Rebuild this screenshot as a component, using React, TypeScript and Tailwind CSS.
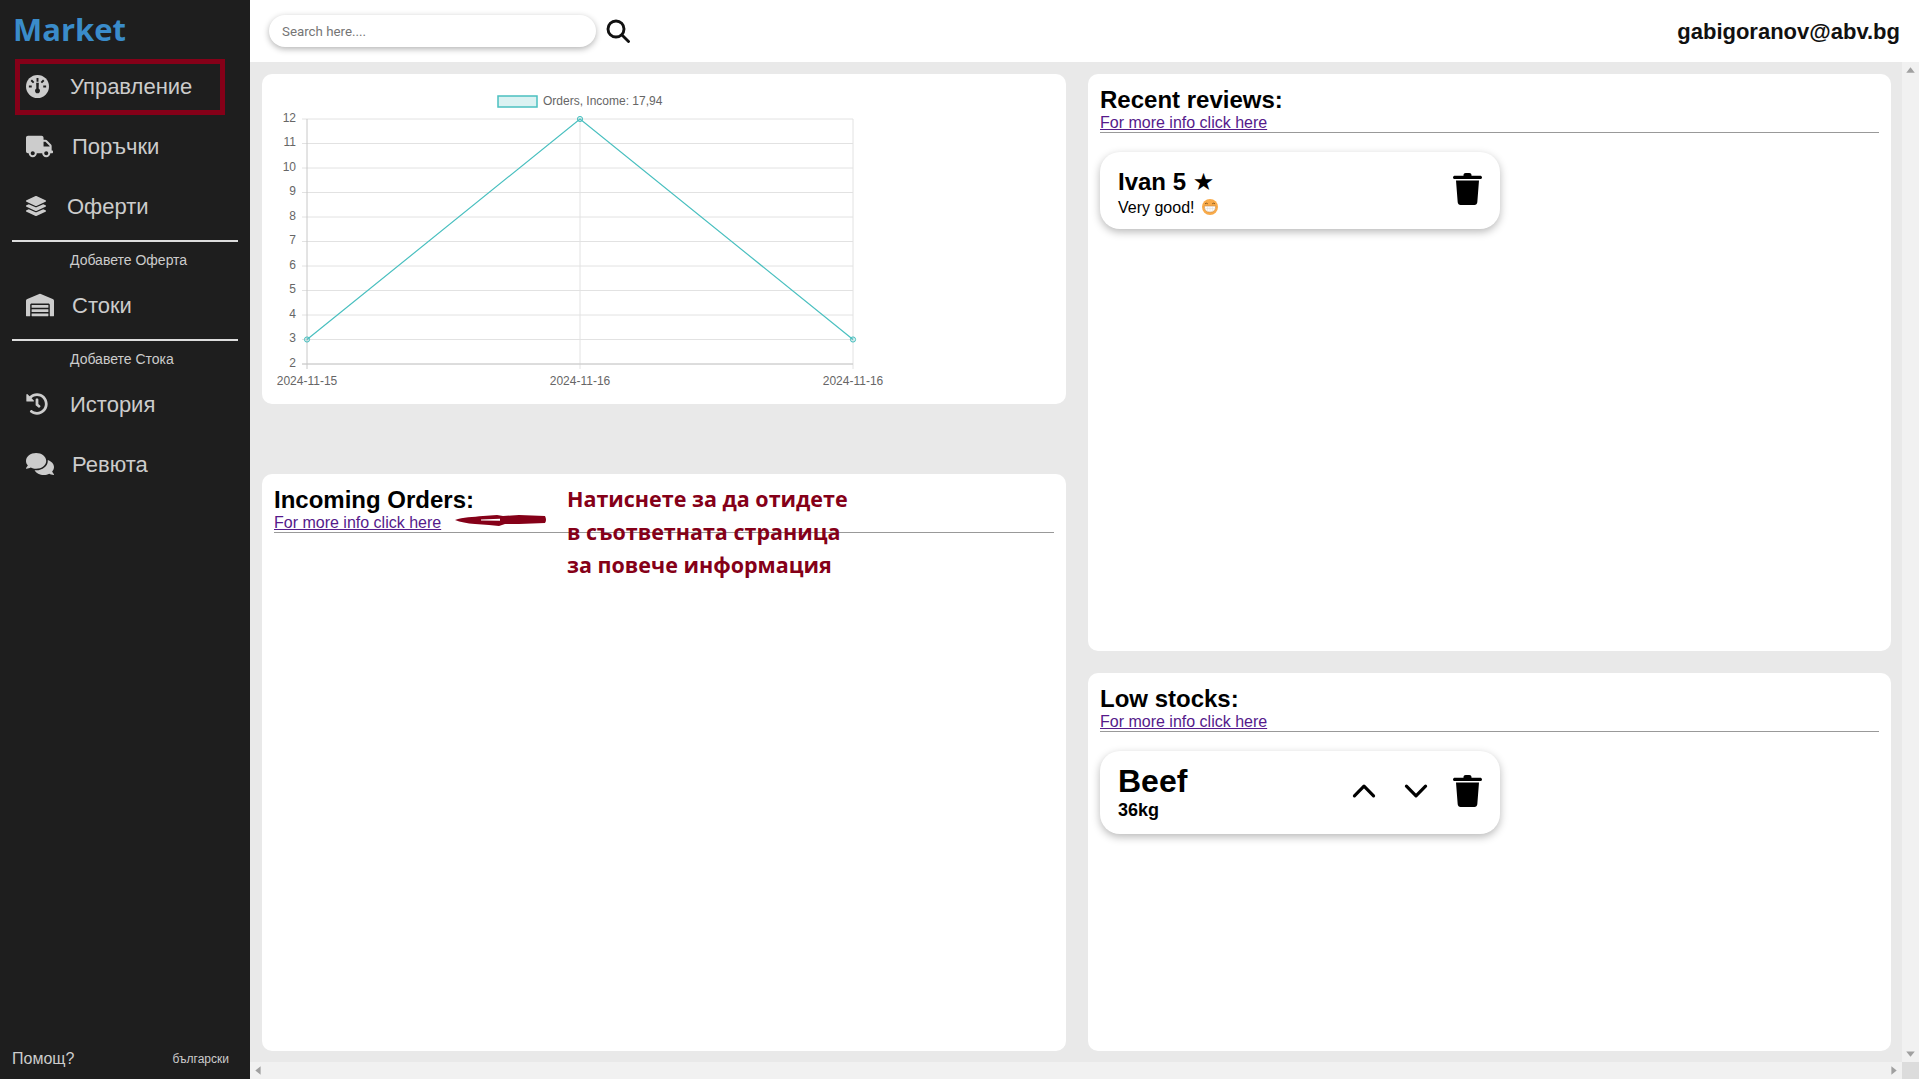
import type { ReactNode } from 'react';
import { FaTruck, FaLayerGroup, FaWarehouse, FaHistory, FaComments } from 'react-icons/fa';
import { IoChevronUp, IoChevronDown } from 'react-icons/io5';

const yTicks = [12, 11, 10, 9, 8, 7, 6, 5, 4, 3, 2];
const chartLeft = 45;
const chartMid = 318;
const chartRight = 591;
const chartTop = 45;
const tickGap = 24.5;
const yFor = (value: number) => chartTop + (12 - value) * tickGap;
const xTicks = [chartLeft, chartMid, chartRight];
const chartPoints = [
  { x: chartLeft, y: yFor(3) },
  { x: chartMid, y: yFor(12) },
  { x: chartRight, y: yFor(3) },
];

function GaugeIcon() {
  return (
    <svg viewBox="0 0 24 24" className="h-[23px] w-[23px]">
      <circle cx="12" cy="12" r="12" fill="#cccccc" />
      <path d="M12 3v4M5.500 5.500l2.500 2.500M18.500 5.500L16 8M3 12h3M21 12h-3" stroke="#1e1e1e" strokeWidth="2" />
      <path d="M10.600 8h2.800l-.2 6.200a2.600 2.600 0 1 1-2.400 0z" fill="#1e1e1e" />
    </svg>
  );
}

function NavItem({ icon, label, gap }: { icon: ReactNode; label: string; gap: string }) {
  return (
    <div className={`flex h-[60px] items-center pl-[26px] text-[22px] text-[#cccccc] ${gap}`}>
      {icon}
      <span>{label}</span>
    </div>
  );
}

function SubItem({ label }: { label: string }) {
  return (
    <>
      <div className="mx-3 h-[2px] bg-[#dddddd]" />
      <div className="flex h-[33px] items-center pt-[4px] pl-[70px] text-[14px] text-[#cccccc]">{label}</div>
    </>
  );
}

function Sidebar() {
  return (
    <aside className="relative flex h-full w-[250px] shrink-0 flex-col bg-[#1e1e1e]">
      <div className="h-[56px] pl-[13px] pt-[7px] font-['Open_Sans',sans-serif] text-[31px] leading-[45px] font-bold text-[#3a8cca]">
        Market
      </div>
      <NavItem icon={<GaugeIcon />} label="Управление" gap="gap-[21px]" />
      <NavItem icon={<FaTruck className="text-[27px]" />} label="Поръчки" gap="gap-[19px]" />
      <NavItem icon={<FaLayerGroup className="text-[20px]" />} label="Оферти" gap="gap-[21px]" />
      <div className="h-[4px]" />
      <SubItem label="Добавете Оферта" />
      <NavItem icon={<FaWarehouse className="text-[28px]" />} label="Стоки" gap="gap-[18px]" />
      <div className="h-[4px]" />
      <SubItem label="Добавете Стока" />
      <NavItem icon={<FaHistory className="text-[22px]" />} label="История" gap="gap-[22px]" />
      <NavItem icon={<FaComments className="text-[28px]" />} label="Ревюта" gap="gap-[18px]" />
      <div className="mt-auto flex h-[42px] items-center justify-between pt-[2px] pl-3 pr-[21px] text-[#cccccc]">
        <span className="text-[16px]">Помощ?</span>
        <span className="text-[12px]">български</span>
      </div>
      {/* annotation box round the first item */}
      <div className="absolute left-[15px] top-[59px] h-[56px] w-[210px] border-[5px] border-[#850018]" />
    </aside>
  );
}

function TopBar() {
  return (
    <header className="flex h-[62px] shrink-0 items-center bg-white pr-[19px] pl-[19px]">
      <input
        placeholder="Search here...."
        className="mb-[1px] h-[32px] w-[327px] rounded-full bg-white pt-[2px] pr-3 pl-[13px] font-['Roboto',sans-serif] text-[13.3px] text-black shadow-[0_2px_6px_rgba(0,0,0,0.3)] outline-none placeholder:text-[#757575]"
      />
      <svg viewBox="0 0 24 24" className="mb-[1px] ml-[10px] h-[24px] w-[24px]" fill="none" stroke="#111111" strokeWidth="2.9">
        <circle cx="10" cy="10" r="8" />
        <line x1="16" y1="16" x2="22.500" y2="22.500" strokeLinecap="round" />
      </svg>
      <span className="ml-auto text-[22px] font-bold text-[#111111]">gabigoranov@abv.bg</span>
    </header>
  );
}

function OrdersChart() {
  return (
    <svg viewBox="0 0 804 330" className="block h-[330px] w-[804px]" fontFamily="'Liberation Sans', sans-serif">
      <rect x="236" y="22" width="39" height="11" fill="rgba(75,192,192,0.2)" stroke="#4bc0c0" strokeWidth="1.500" />
      <text x="281" y="31" fontSize="12" fill="#666666">
        Orders, Income: 17,94
      </text>
      {yTicks.map((tick) => (
        <g key={tick}>
          <line x1={chartLeft - 5} x2={chartRight} y1={yFor(tick)} y2={yFor(tick)} stroke="#e2e2e2" />
          <text x={chartLeft - 11} y={yFor(tick) + 2.5} textAnchor="end" fontSize="12" fill="#666666">
            {tick}
          </text>
        </g>
      ))}
      {xTicks.map((x) => (
        <g key={x}>
          <line x1={x} x2={x} y1={chartTop} y2={yFor(2) + 5} stroke={x === chartLeft ? '#c8c8c8' : '#e2e2e2'} />
          <text x={x} y={311} textAnchor="middle" fontSize="12" fill="#666666">
            {x === chartLeft ? '2024-11-15' : '2024-11-16'}
          </text>
        </g>
      ))}
      <line x1={chartLeft - 5} x2={chartRight} y1={yFor(2)} y2={yFor(2)} stroke="#c8c8c8" />
      <polyline
        fill="none"
        stroke="#4bc0c0"
        strokeWidth="1.200"
        points={chartPoints.map((point) => `${point.x},${point.y}`).join(' ')}
      />
      {chartPoints.map((point) => (
        <circle key={point.x} cx={point.x} cy={point.y} r="2.600" fill="rgba(75,192,192,0.2)" stroke="#4bc0c0" />
      ))}
    </svg>
  );
}

function SectionHeader({ title }: { title: string }) {
  return (
    <div className="border-b border-[#999999]">
      <h2 className="text-[24px] leading-[28px] font-bold text-black">{title}</h2>
      <a href="#" className="block text-[16px] leading-[18px] text-[#551a8b] underline">
        For more info click here
      </a>
    </div>
  );
}

function TrashIcon() {
  return (
    <svg viewBox="0 0 29 32" className="h-[32px] w-[29px]" fill="#000000">
      <path d="M10.500 2.200C10.500.9 11.400 0 12.700 0h3.600c1.300 0 2.200.9 2.200 2.200v.6h8.600c1 0 1.900.7 1.900 1.600S28 6 27.100 6H1.900C1 6 0 5.300 0 4.400s1-1.600 1.900-1.600h8.600z" />
      <path d="M3 7.500h23l-1.700 21.800c-.1 1.600-1.300 2.700-2.800 2.700H7.500c-1.500 0-2.700-1.100-2.800-2.700z" />
    </svg>
  );
}

function GrinEmoji() {
  return (
    <svg viewBox="0 0 16 16" className="ml-[7px] inline-block h-[16px] w-[16px] align-[-2px]">
      <circle cx="8" cy="8" r="8" fill="#f9ab4a" />
      <path d="M3 4.800q1.400-1.200 2.800 0M10.200 4.800q1.400-1.200 2.800 0" fill="none" stroke="#8a5a20" strokeWidth="1" />
      <path d="M2.200 7h11.600q0 6.200-5.800 6.200T2.200 7z" fill="#ffffff" stroke="#c98536" strokeWidth="0.600" />
      <path d="M2.500 9.600h11M5.600 7.200v5.400M8 7.200v5.800M10.400 7.200v5.400" stroke="#d8d8d8" strokeWidth="0.500" />
    </svg>
  );
}

function ReviewCard() {
  return (
    <div className="mt-[19px] flex h-[77px] w-[400px] items-start justify-between rounded-[20px] bg-white pt-[16px] pr-[18px] pl-[18px] shadow-[0_3px_8px_rgba(0,0,0,0.28)]">
      <div>
        <div className="text-[24px] leading-[28px] font-bold text-black">
          Ivan 5 <span className="font-['DejaVu_Sans',sans-serif]">★</span>
        </div>
        <div className="text-[16px] leading-[24px] text-black">
          Very good!
          <GrinEmoji />
        </div>
      </div>
      <div className="pt-[5px]">
        <TrashIcon />
      </div>
    </div>
  );
}

function StockCard() {
  return (
    <div className="mt-[19px] flex h-[83px] w-[400px] items-center rounded-[20px] bg-white pr-[18px] pb-[4px] pl-[18px] shadow-[0_3px_8px_rgba(0,0,0,0.28)]">
      <div className="flex-1 pt-[1px] font-bold text-black">
        <div className="text-[32px] leading-[36px]">Beef</div>
        <div className="mt-[1px] text-[18px] leading-[20px]">36kg</div>
      </div>
      <IoChevronUp className="text-[34px] text-black" />
      <IoChevronDown className="ml-[18px] text-[34px] text-black" />
      <div className="ml-[20px]">
        <TrashIcon />
      </div>
    </div>
  );
}

function Annotation() {
  return (
    <>
      <svg viewBox="0 0 92 14" className="absolute top-[39px] left-[193px] h-[14px] w-[92px]">
        <path
          d="M0 7C8 4 18 4 28 3l14-1 6 1 16-1 26 1q2 4 0 7l-26 1-14 0-6 2-10-1-14-1Q8 10 0 7z"
          fill="#850018"
        />
        <path d="M26 6.500l19-.8v2l-19-.2z" fill="#ffffff" />
      </svg>
      <div className="absolute top-[8px] left-[305px] font-['Open_Sans',sans-serif] text-[21.5px] leading-[33px] font-bold text-[#850018]">
        Натиснете за да отидете
        <br />в съответната страница
        <br />
        за повече информация
      </div>
    </>
  );
}

function ScrollArrow({ direction }: { direction: 'up' | 'down' | 'left' | 'right' }) {
  const points = {
    up: '4,10 8,5 12,10',
    down: '4,6 8,11 12,6',
    left: '10,4 5,8 10,12',
    right: '6,4 11,8 6,12',
  }[direction];
  return (
    <svg viewBox="0 0 16 16" className="h-[17px] w-[17px] shrink-0" fill="#a0a0a0">
      <polygon points={points} />
    </svg>
  );
}

export default function App() {
  return (
    <div className="flex h-[1079px] w-full overflow-hidden bg-[#e9e9e9] font-['Liberation_Sans',sans-serif]">
      <Sidebar />
      <div className="flex min-w-0 flex-1 flex-col">
        <TopBar />
        <div className="flex min-h-0 flex-1">
          <main className="flex flex-1 gap-[22px] pt-3 pl-3">
            <div className="flex w-[804px] flex-col gap-[70px]">
              <section className="h-[330px] overflow-hidden rounded-[10px] bg-white">
                <OrdersChart />
              </section>
              <section className="relative h-[577px] rounded-[10px] bg-white px-3 pt-3">
                <SectionHeader title="Incoming Orders:" />
                <Annotation />
              </section>
            </div>
            <div className="flex w-[803px] flex-col gap-[22px]">
              <section className="h-[577px] rounded-[10px] bg-white px-3 pt-3">
                <SectionHeader title="Recent reviews:" />
                <ReviewCard />
              </section>
              <section className="h-[378px] rounded-[10px] bg-white px-3 pt-3">
                <SectionHeader title="Low stocks:" />
                <StockCard />
              </section>
            </div>
          </main>
          <div className="flex w-[17px] shrink-0 flex-col justify-between bg-[#f1f1f1]">
            <ScrollArrow direction="up" />
            <ScrollArrow direction="down" />
          </div>
        </div>
        <div className="flex h-[17px] shrink-0 bg-[#f1f1f1]">
          <ScrollArrow direction="left" />
          <div className="flex-1" />
          <ScrollArrow direction="right" />
          <div className="w-[17px] bg-[#dcdcdc]" />
        </div>
      </div>
    </div>
  );
}
